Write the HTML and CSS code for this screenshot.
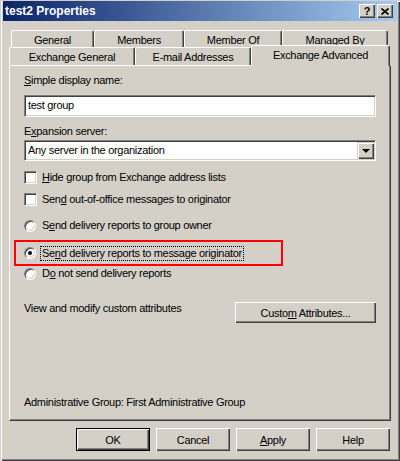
FILE: index.html
```html
<!DOCTYPE html>
<html lang="en">
<head>
    <meta charset="UTF-8">
    <title>test2 Properties</title>
    <link rel="stylesheet" href="styles.css">
</head>
<body>
    <div class="window">
        <div class="titlebar">
            <span class="title">test2 Properties</span>
            <div class="caption-btns">
                <span class="cap-btn">?</span>
                <span class="cap-btn">
                    <svg width="8" height="7" viewBox="0 0 8 7"><path d="M0.5 0.5 L7.5 6.5 M7.5 0.5 L0.5 6.5" stroke="#000" stroke-width="1.6"/></svg>
                </span>
            </div>
        </div>

        <div class="body">
            <div class="tabs">
                <div class="tab-row back">
                    <div class="tab t-general">General</div>
                    <div class="tab t-members">Members</div>
                    <div class="tab t-memberof">Member Of</div>
                    <div class="tab t-managed">Managed By</div>
                </div>
                <div class="tab-row front">
                    <div class="tab t-exgeneral">Exchange General</div>
                    <div class="tab t-email">E-mail Addresses</div>
                    <div class="tab t-exadv active">Exchange Advanced</div>
                </div>
            </div>

            <div class="panel">
                <div class="label"><u>S</u>imple display name:</div>
                <div class="textbox">test group</div>

                <div class="label gap-label">E<u>x</u>pansion server:</div>
                <div class="combo">
                    <span class="combo-text">Any server in the organization</span>
                    <span class="combo-btn"><span class="arrow"></span></span>
                </div>

                <div class="option check-1"><span class="checkbox"></span><span><u>H</u>ide group from Exchange address lists</span></div>
                <div class="option check-2"><span class="checkbox"></span><span>Sen<u>d</u> out-of-office messages to originator</span></div>

                <div class="option radio-1"><span class="radio"></span><span>S<u>e</u>nd delivery reports to group owner</span></div>
                <div class="highlight">
                    <div class="option"><span class="radio checked"></span><span class="focus">Se<u>n</u>d delivery reports to message originator</span></div>
                </div>
                <div class="option radio-3"><span class="radio"></span><span>D<u>o</u> not send delivery reports</span></div>

                <div class="custom-row">
                    <span class="custom-text">View and modify custom attributes</span>
                    <button class="btn custom-btn">Custo<u>m</u> Attributes...</button>
                </div>

                <div class="admin">Administrative Group: First Administrative Group</div>
            </div>

            <div class="actions">
                <button class="btn default">OK</button>
                <button class="btn">Cancel</button>
                <button class="btn"><u>A</u>pply</button>
                <button class="btn">Help</button>
            </div>
        </div>
    </div>
</body>
</html>
```

FILE: styles.css
```css
* {
    box-sizing: border-box;
}

body {
    margin: 0;
    background: #d4d0c8;
    font-family: "Liberation Sans", Arial, sans-serif;
    font-size: 11px;
    letter-spacing: -0.3px;
    color: #000;
}

.window {
    width: 400px;
    height: 461px;
    display: flex;
    flex-direction: column;
    padding: 1px 3px 3px 3px;
    background: #d4d0c8;
    box-shadow: inset 1px 1px #d4d0c8, inset 2px 2px #fff,
                inset -1px -1px #404040, inset -2px -2px #808080;
}

/* title bar */
.titlebar {
    height: 20px;
    display: flex;
    align-items: center;
    justify-content: space-between;
    padding: 0 4px 0 2px;
    background: linear-gradient(to right, #0a246a, #a6caf0);
}

.title {
    color: #fff;
    font-weight: bold;
    font-size: 12px;
    letter-spacing: 0;
}

.caption-btns {
    display: flex;
    gap: 2px;
}

.cap-btn {
    width: 16px;
    height: 14px;
    display: flex;
    align-items: center;
    justify-content: center;
    font-weight: bold;
    font-size: 11px;
    line-height: 1;
    background: #d4d0c8;
    box-shadow: inset 1px 1px #fff, inset -1px -1px #404040, inset -2px -2px #808080;
}

.body {
    flex: 1;
    display: flex;
    flex-direction: column;
    padding: 9px 6px 0 6px;
}

/* tabs */
.tabs {
    height: 35px;
    display: flex;
    flex-direction: column;
}

.tab-row {
    display: flex;
    align-items: flex-end;
}

.tab-row.back {
    height: 17px;
    padding-left: 2px;
}

.tab-row.front {
    height: 18px;
    position: relative;
}

.tab {
    height: 100%;
    text-align: center;
    line-height: 19px;
    background: #d4d0c8;
    border-top: 1px solid #fff;
    border-left: 1px solid #fff;
    border-right: 1px solid #404040;
    border-radius: 2px 2px 0 0;
    box-shadow: inset -1px 0 #808080;
}

.tab-row.back .tab {
    height: 19px;
    align-self: flex-start;
    line-height: 18px;
}

.t-general { width: 83px; }
.t-members { width: 90px; }
.t-memberof { width: 98px; }
.t-managed { width: 106px; }
.t-exgeneral { width: 126px; }
.t-email { width: 116px; }
.t-exadv { width: 139px; }

.tab.active {
    height: 21px;
    margin-bottom: -1px;
    position: relative;
    z-index: 2;
    line-height: 19px;
}

/* panel */
.panel {
    height: 356px;
    display: flex;
    flex-direction: column;
    padding: 8px 14px 11px 14px;
    border: 1px solid;
    border-color: #fff #404040 #404040 #fff;
    box-shadow: inset -1px -1px #808080;
}

.label {
    line-height: 13px;
    height: 13px;
}

.gap-label {
    margin-top: 8px;
}

.textbox,
.combo {
    margin-top: 8px;
    height: 22px;
    line-height: 18px;
    padding-left: 3px;
    background: #fff;
    border: 1px solid;
    border-color: #808080 #fff #fff #808080;
    box-shadow: inset 1px 1px #404040, inset -1px -1px #d4d0c8;
}

.combo {
    margin-top: 2px;
    height: 21px;
    display: flex;
    justify-content: space-between;
    padding: 1px 1px 1px 3px;
    line-height: 17px;
}

.combo-btn {
    width: 17px;
    height: 17px;
    display: flex;
    align-items: center;
    justify-content: center;
    background: #d4d0c8;
    box-shadow: inset 1px 1px #d4d0c8, inset 2px 2px #fff,
                inset -1px -1px #404040, inset -2px -2px #808080;
}

.arrow {
    width: 0;
    height: 0;
    border-left: 4px solid transparent;
    border-right: 4px solid transparent;
    border-top: 4px solid #000;
}

/* checkboxes and radios */
.option {
    display: flex;
    align-items: center;
    height: 13px;
    line-height: 13px;
}

.check-1 { margin-top: 10px; }
.check-2 { margin-top: 9px; }
.radio-1 { margin-top: 13px; }
.radio-3 { margin-top: 1px; }

.checkbox {
    width: 13px;
    height: 13px;
    margin-right: 5px;
    background: #fff;
    border: 1px solid;
    border-color: #808080 #fff #fff #808080;
    box-shadow: inset 1px 1px #404040, inset -1px -1px #d4d0c8;
}

.radio {
    width: 12px;
    height: 12px;
    margin-right: 6px;
    border-radius: 50%;
    background: #fff;
    border: 1px solid;
    border-color: #808080 #fff #fff #808080;
    box-shadow: inset 1px 1px #404040, inset -1px -1px #d4d0c8;
    display: flex;
    align-items: center;
    justify-content: center;
}

.radio.checked::after {
    content: "";
    width: 4px;
    height: 4px;
    border-radius: 50%;
    background: #000;
}

.highlight {
    margin-top: 8px;
    margin-left: -10px;
    width: 269px;
    height: 26px;
    display: flex;
    align-items: center;
    padding-left: 8px;
    border: 2px solid #f00;
}

.focus {
    outline: 1px dotted #000;
    outline-offset: 0;
    padding: 0 1px;
    margin-left: -1px;
}

/* custom attributes */
.custom-row {
    margin-top: 22px;
    display: flex;
    justify-content: space-between;
    align-items: flex-start;
}

.custom-text {
    line-height: 13px;
}

.btn {
    font-family: inherit;
    font-size: 11px;
    letter-spacing: -0.3px;
    color: #000;
    background: #d4d0c8;
    border: none;
    padding: 0;
    height: 23px;
    width: 74px;
    box-shadow: inset 1px 1px #fff, inset -1px -1px #404040, inset -2px -2px #808080;
}

.custom-btn {
    width: 141px;
    height: 21px;
}

.admin {
    margin-top: auto;
    line-height: 13px;
}

/* dialog buttons */
.actions {
    margin-top: 7px;
    display: flex;
    justify-content: flex-end;
    gap: 6px;
    padding-right: 1px;
}

.btn.default {
    border: 1px solid #000;
    box-shadow: inset 1px 1px #fff, inset -1px -1px #404040, inset -2px -2px #808080;
}
```
